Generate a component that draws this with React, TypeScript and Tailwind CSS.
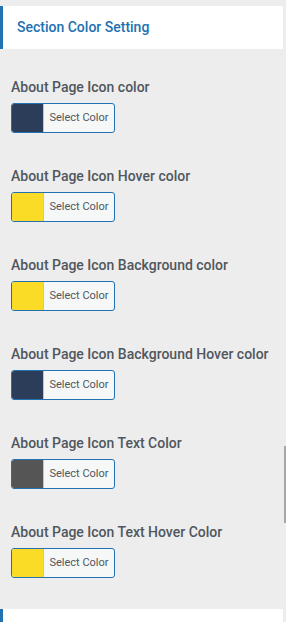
const rows = [
  { label: 'About Page Icon color', color: 'bg-[#2c3d59]' },
  { label: 'About Page Icon Hover color', color: 'bg-[#fadc27]' },
  { label: 'About Page Icon Background color', color: 'bg-[#fadc27]' },
  { label: 'About Page Icon Background Hover color', color: 'bg-[#2c3d59]' },
  { label: 'About Page Icon Text Color', color: 'bg-[#555555]' },
  { label: 'About Page Icon Text Hover Color', color: 'bg-[#fadc27]' },
]

export default function App() {
  return (
    <div className="relative h-[622px] w-[286px] overflow-hidden bg-[#ededed] font-['Roboto',sans-serif]">
      <div className="pt-[6px] pr-[3px]">
        <div className="flex h-[43px] items-center border-l-[3px] border-[#2271b1] bg-white pl-[14px]">
          <span className="text-[14px] font-medium text-[#2271b1]">Section Color Setting</span>
        </div>
      </div>
      <div className="flex flex-col gap-[34px] pt-[29px]">
        {rows.map((r) => (
          <div key={r.label} className="pl-[11px]">
            <div className="text-[14px] leading-[18px] font-medium text-[#50575e]">{r.label}</div>
            <button className="mt-[7px] flex h-[30px] w-[104px] overflow-hidden rounded-[3px] border border-[#2271b1] bg-[#f6f7f7]">
              <span className={`h-full w-[31px] ${r.color}`} />
              <span className="flex h-full flex-1 items-center justify-center border-l border-[#c3c4c7] text-[11px] text-[#50575e]">
                Select Color
              </span>
            </button>
          </div>
        ))}
      </div>
      <div className="mt-[31px] pr-[3px]">
        <div className="h-[43px] border-l-[3px] border-[#2271b1] bg-white" />
      </div>
      <div className="absolute right-0 top-[446px] h-[77px] w-[2px] bg-[#a7a7a7]" />
    </div>
  )
}
